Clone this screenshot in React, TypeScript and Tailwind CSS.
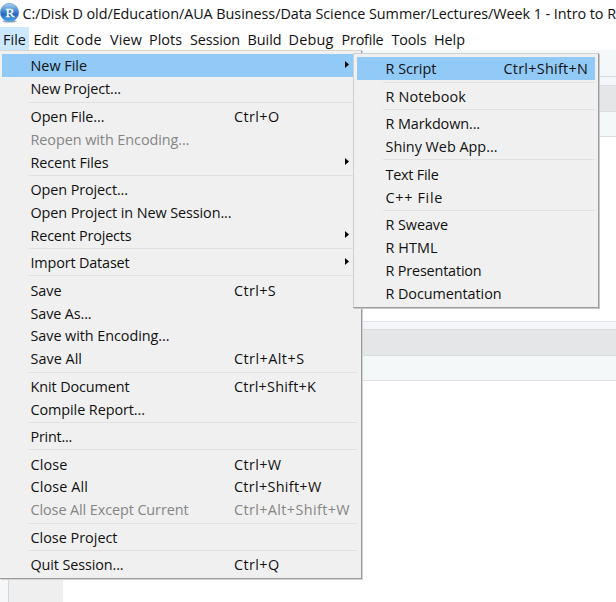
import { useLayoutEffect, useRef } from 'react';

type Entry = { label: string; width: number; keys?: string; keysWidth?: number; disabled?: boolean; submenu?: boolean; active?: boolean };

/* Label whose tracking is adjusted so that it fills a given advance width. */
function Label({ text, width, className = '' }: { text: string; width: number; className?: string }) {
  const ref = useRef<HTMLSpanElement>(null);
  useLayoutEffect(() => {
    const fit = () => {
      const el = ref.current;
      if (!el) return;
      el.style.letterSpacing = '0px';
      const natural = el.getBoundingClientRect().width;
      el.style.letterSpacing = `${(width - natural) / text.length}px`;
    };
    fit();
    document.fonts.ready.then(fit);
  }, [text, width]);
  return (
    <span ref={ref} className={`inline-block whitespace-pre ${className}`}>
      {text}
    </span>
  );
}

const menuBar = [
  { label: 'File', left: 'ml-[3px]', width: 23 },
  { label: 'Edit', left: 'ml-[7.5px]', width: 25 },
  { label: 'Code', left: 'ml-[7.5px]', width: 36 },
  { label: 'View', left: 'ml-[8px]', width: 32 },
  { label: 'Plots', left: 'ml-[7px]', width: 33 },
  { label: 'Session', left: 'ml-[8px]', width: 50 },
  { label: 'Build', left: 'ml-[7.5px]', width: 34 },
  { label: 'Debug', left: 'ml-[7px]', width: 45 },
  { label: 'Profile', left: 'ml-[8px]', width: 42 },
  { label: 'Tools', left: 'ml-[8px]', width: 35 },
  { label: 'Help', left: 'ml-[7.5px]', width: 31 },
];

const fileGroups: Entry[][] = [
  [
    { label: 'New File', width: 56.5, submenu: true, active: true },
    { label: 'New Project...', width: 90.5 },
  ],
  [
    { label: 'Open File...', width: 74, keys: 'Ctrl+O', keysWidth: 45.5 },
    { label: 'Reopen with Encoding...', width: 159, disabled: true },
    { label: 'Recent Files', width: 78, submenu: true },
  ],
  [
    { label: 'Open Project...', width: 97.5 },
    { label: 'Open Project in New Session...', width: 201 },
    { label: 'Recent Projects', width: 101, submenu: true },
  ],
  [{ label: 'Import Dataset', width: 99, submenu: true }],
  [
    { label: 'Save', width: 31, keys: 'Ctrl+S', keysWidth: 42 },
    { label: 'Save As...', width: 61 },
    { label: 'Save with Encoding...', width: 139 },
    { label: 'Save All', width: 51.5, keys: 'Ctrl+Alt+S', keysWidth: 70.5 },
  ],
  [
    { label: 'Knit Document', width: 99, keys: 'Ctrl+Shift+K', keysWidth: 82 },
    { label: 'Compile Report...', width: 114.5 },
  ],
  [{ label: 'Print...', width: 41.5 }],
  [
    { label: 'Close', width: 37, keys: 'Ctrl+W', keysWidth: 47.5 },
    { label: 'Close All', width: 57.5, keys: 'Ctrl+Shift+W', keysWidth: 87.5 },
    { label: 'Close All Except Current', width: 158, keys: 'Ctrl+Alt+Shift+W', keysWidth: 116, disabled: true },
  ],
  [{ label: 'Close Project', width: 87 }],
  [{ label: 'Quit Session...', width: 93, keys: 'Ctrl+Q', keysWidth: 45.5 }],
];

const newGroups: Entry[][] = [
  [{ label: 'R Script', width: 51, keys: 'Ctrl+Shift+N', keysWidth: 84.5, active: true }],
  [{ label: 'R Notebook', width: 80.5 }],
  [
    { label: 'R Markdown...', width: 94.5 },
    { label: 'Shiny Web App...', width: 112 },
  ],
  [
    { label: 'Text File', width: 53 },
    { label: 'C++ File', width: 57.5 },
  ],
  [
    { label: 'R Sweave', width: 62.5 },
    { label: 'R HTML', width: 52 },
    { label: 'R Presentation', width: 96 },
    { label: 'R Documentation', width: 116 },
  ],
];

function Menu({ groups, keysColumn }: { groups: Entry[][]; keysColumn: string }) {
  return (
    <div className="flex flex-col">
      {groups.map((group, i) => (
        <div key={group[0].label} className="flex flex-col">
          {i > 0 && (
            <div className="flex h-[4.6px] items-center pl-[26px]">
              <div className="h-px w-full bg-[#e0e1e1]" />
            </div>
          )}
          {group.map((item) => (
            <div
              key={item.label}
              className={`flex h-[22.88px] items-center pt-[2px] pl-[28.5px] ${item.active ? 'bg-[#91c9f7]' : ''} ${item.disabled ? 'text-[#858585]' : 'text-[#111]'}`}
            >
              <div className={`shrink-0 ${keysColumn}`}>
                <Label text={item.label} width={item.width} />
              </div>
              {item.keys && <Label text={item.keys} width={item.keysWidth ?? 0} />}
              {item.submenu && (
                <svg className="mr-[8px] mb-[3px] ml-auto h-[7px] w-[4px]" viewBox="0 0 4 7">
                  <path d="M0 0 4 3.5 0 7Z" fill="#000" />
                </svg>
              )}
            </div>
          ))}
        </div>
      ))}
    </div>
  );
}

function RLogo() {
  return (
    <svg className="mt-[3px] h-[20px] w-[20px] shrink-0" viewBox="0 0 20 20">
      <defs>
        <linearGradient id="ball" x1="0" y1="0" x2="0" y2="1">
          <stop offset="0" stopColor="#a9d1f5" />
          <stop offset=".45" stopColor="#4385d2" />
          <stop offset=".6" stopColor="#2467bd" />
          <stop offset="1" stopColor="#55a9ee" />
        </linearGradient>
      </defs>
      <ellipse cx="9.5" cy="18.3" rx="7.5" ry="1.2" fill="#9eafc2" />
      <circle cx="9.5" cy="9.5" r="9.2" fill="url(#ball)" stroke="#4f86c5" strokeWidth=".5" />
      <text x="10" y="14" textAnchor="middle" fontFamily="Liberation Serif, serif" fontSize="13.5" fill="#fff" stroke="#fff" strokeWidth=".3">R</text>
    </svg>
  );
}

function Pane({ gap }: { gap: string }) {
  return (
    <>
      <div className={`shrink-0 bg-[#f5f6f9] ${gap}`} />
      <div className="h-[26px] shrink-0 border-t border-[#dcdfe2] bg-[#e5e6e8]" />
      <div className="h-[26px] shrink-0 border-y border-[#d8dee1] bg-[#f4f8f9]" />
    </>
  );
}

export default function App() {
  return (
    <div className="relative flex h-[602px] w-[616px] flex-col overflow-hidden bg-white font-['Open_Sans','Noto_Sans',sans-serif] text-[14.4px] leading-[20px] text-[#111]">
      <header className="flex h-[27px] shrink-0">
        <RLogo />
        <Label text="C:/Disk D old/Education/AUA Business/Data Science Summer/Lectures/Week 1 - Intro to R" width={593.5} className="mt-[4px] ml-[2.5px]" />
      </header>
      <nav className="flex h-[23px] shrink-0 bg-[linear-gradient(to_right,#cce8ff_29px,#fff_29px)]">
        {menuBar.map((m) => (
          <Label key={m.label} text={m.label} width={m.width} className={`mt-[3px] ${m.left}`} />
        ))}
      </nav>
      <main className="flex min-h-0 grow flex-col">
        <div className="h-[27px] shrink-0 border-b border-[#d8dee1] bg-[#f4f8f9]" />
        <Pane gap="h-[8px]" />
        <div className="h-[184px] shrink-0" />
        <div className="h-px shrink-0 bg-[#dfe2e6]" />
        <Pane gap="h-[7px]" />
        <div className="flex grow">
          <div className="w-[9px] border-r border-[#d4d8dc] bg-[#f6f7f9]" />
          <div className="w-[54px] bg-[#efefef]" />
        </div>
      </main>

      <div className="absolute top-[50px] left-0 h-[529px] w-[362px] border-t border-r border-b border-t-[#d6d6d6] border-r-[#9c9c9c] border-b-[#9c9c9c] bg-[#f0f0f0] pt-[3px] pr-[4px] pl-[2px] shadow-[1px_1px_0_#d0d0d0]">
        <Menu groups={fileGroups} keysColumn="w-[203.5px]" />
      </div>
      <div className="absolute top-[53px] left-[353px] h-[255px] w-[246px] border border-t-[#d0d0d0] border-r-[#9c9c9c] border-b-[#9c9c9c] border-l-[#d0d0d0] bg-[#f0f0f0] pt-[3px] pr-[3px] pl-[3px] shadow-[1px_1px_0_#c8c8c8]">
        <Menu groups={newGroups} keysColumn="w-[118px]" />
      </div>
    </div>
  );
}
